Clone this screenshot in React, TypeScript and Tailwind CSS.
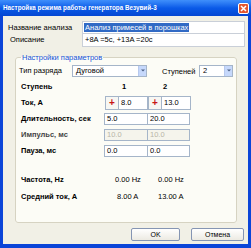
import React from "react"

const Field = ({
  value,
  className = "",
  disabled = false,
}: {
  value: string
  className?: string
  disabled?: boolean
}) => (
  <div
    className={`h-full border border-[#a5b5c9] flex items-center pl-[2px] ${
      disabled ? "bg-[#f5f4ec] text-[#b8b5a8]" : "bg-white"
    } ${className}`}
  >
    {value}
  </div>
)

const Select = ({ value, className = "" }: { value: string; className?: string }) => (
  <div className={`h-[12px] border border-[#a5b5c9] bg-white flex items-center ${className}`}>
    <span className="flex-1 pl-[3px]">{value}</span>
    <span className="h-full w-[8px] bg-[#c6d8fb] border-l border-[#b7c9ee] flex items-center justify-center">
      <svg width="4" height="3" viewBox="0 0 4 3">
        <path d="M0 0.5h4L2 2.5z" fill="#4d6185" />
      </svg>
    </span>
  </div>
)

const PlusButton = () => (
  <div className="h-full w-[14px] border border-[#a5b5c9] bg-[#f7f7f3] flex items-center justify-center text-[#c81414] font-bold text-[10px] leading-none">
    +
  </div>
)

const StepRow = ({
  label,
  a,
  b,
  disabled = false,
}: {
  label: string
  a: string
  b: string
  disabled?: boolean
}) => (
  <div className="flex items-center h-[12px]">
    <span className={`w-[83px] font-bold ${disabled ? "text-[#444]" : ""}`}>{label}</span>
    <Field value={a} disabled={disabled} className="w-[44px]" />
    <Field value={b} disabled={disabled} className="w-[43px] -ml-px" />
  </div>
)

const App = () => {
  return (
    <div className="w-[251px] h-[248px] flex flex-col bg-[#0b45d8] font-['Liberation_Sans',Arial,sans-serif] text-[7.5px] leading-none text-black overflow-hidden">
      <div className="h-[16px] flex items-center bg-gradient-to-b from-[#3f8ffb] via-[#0a5ae8] to-[#0547d2] pl-[3px] pr-[2px]">
        <span className="flex-1 text-white font-bold text-[6.3px]">
          Настройка режима работы генератора Везувий-3
        </span>
        <span className="w-[11px] h-[11px] rounded-[2px] border border-white bg-[#e4562e] flex items-center justify-center">
          <svg width="7" height="7" viewBox="0 0 7 7">
            <path d="M1 1l5 5M6 1l-5 5" stroke="white" strokeWidth="1.5" />
          </svg>
        </span>
      </div>

      <div className="flex-1 mx-[3px] mb-[4px] bg-[#f1f0e6] flex flex-col">
        <div className="flex items-center h-[13px] mt-[5px]">
          <span className="w-[79px] pl-[5px]">Название анализа</span>
          <div className="flex-1 mr-[3px] h-full border border-[#c9cfd8] bg-white flex items-center pl-[1px]">
            <span className="bg-[#316ac5] text-white px-[1px] py-[1px]">Анализ примесей в порошках</span>
          </div>
        </div>
        <div className="flex items-center h-[14px] -mt-px">
          <span className="w-[79px] pl-[7px]">Описание</span>
          <div className="flex-1 mr-[3px] h-full border border-[#c9cfd8] bg-white flex items-center pl-[2px]">
            +8A =5c, +13A =20c
          </div>
        </div>

        <fieldset className="mt-[7px] ml-[12px] mr-[11px] border border-[#d6d3c2] rounded-[3px] bg-[#fcfcf6] pl-[3px] pb-[19px]">
          <legend className="ml-[2px] px-[1px] text-[#1653d6]">Настройки параметров</legend>

          <div className="flex items-center mt-[3px]">
            <span className="w-[53px]">Тип разряда</span>
            <Select value="Дуговой" className="w-[75px]" />
            <span className="ml-[15px] w-[37px] pt-[3px]">Ступеней</span>
            <Select value="2" className="w-[34px]" />
          </div>

          <div className="pl-[2px] flex flex-col">
            <div className="flex items-center h-[12px] mt-[4px] font-bold">
              <span className="w-[101px]">Ступень</span>
              <span className="w-[41px]">1</span>
              <span>2</span>
            </div>

            <div className="flex items-center h-[14px] mt-[3px]">
              <span className="w-[84px] font-bold">Ток, А</span>
              <PlusButton />
              <Field value="8.0" className="w-[30px] -ml-px" />
              <PlusButton />
              <Field value="13.0" className="w-[30px] -ml-px" />
            </div>

            <div className="flex flex-col gap-[4px] mt-[3px]">
              <StepRow label="Длительность, сек" a="5.0" b="20.0" />
              <StepRow label="Импульс, мс" a="10.0" b="10.0" disabled />
              <StepRow label="Пауза, мс" a="0.0" b="0.0" />
            </div>

            <div className="flex items-center h-[12px] mt-[17px]">
              <span className="w-[94px] font-bold">Частота, Hz</span>
              <span className="w-[43px]">0.00 Hz</span>
              <span>0.00 Hz</span>
            </div>
            <div className="flex items-center h-[12px] mt-[5px]">
              <span className="w-[96px] font-bold">Средний ток, А</span>
              <span className="w-[41px]">8.00 A</span>
              <span>13.00 A</span>
            </div>
          </div>
        </fieldset>

        <div className="flex justify-end gap-[11px] mt-[5px] mr-[4px]">
          <button className="w-[49px] h-[13px] border border-[#8595b3] rounded-[2px] bg-gradient-to-b from-white to-[#eceae2] text-[7px]">
            OK
          </button>
          <button className="w-[53px] h-[13px] border border-[#8595b3] rounded-[2px] bg-gradient-to-b from-white to-[#eceae2] text-[7px]">
            Отмена
          </button>
        </div>
      </div>
    </div>
  )
}

export default App
